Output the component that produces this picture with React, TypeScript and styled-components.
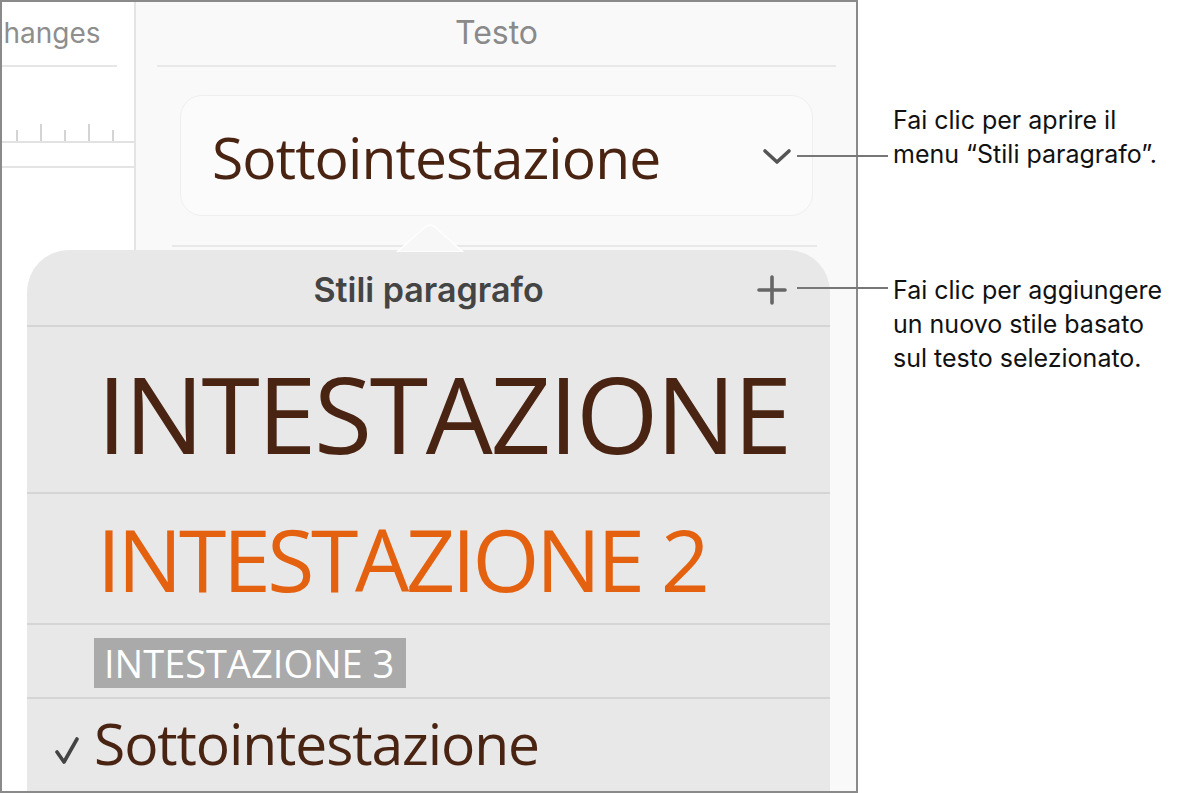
import * as React from 'react'
import styled, { createGlobalStyle } from 'styled-components'

const GlobalStyle = createGlobalStyle`
  html, body {
    margin: 0;
    padding: 0;
    background: #fff;
  }
  body {
    font-family: Inter, "Liberation Sans", sans-serif;
  }
`

const brown = '#4a2412'
const orange = '#e4620f'
const styleFont = '"Open Sans", "Noto Sans", sans-serif'

const Page = styled.div`
  display: flex;
  width: 1204px;
  height: 793px;
  background: #fff;
`

const Frame = styled.div`
  position: relative;
  display: flex;
  width: 858px;
  height: 793px;
  box-sizing: border-box;
  border: 2px solid #8a8a8a;
  overflow: hidden;
  flex-shrink: 0;
`

const LeftPane = styled.div`
  width: 132px;
  flex-shrink: 0;
  background: #fff;
  border-right: 2px solid #e4e4e4;
  overflow: hidden;
`

const CutTitle = styled.div`
  margin-left: -19px;
  padding-top: 15px;
  font-size: 28px;
  line-height: 32px;
  color: #8e8e8e;
  white-space: nowrap;
`

const ShortRule = styled.div`
  width: 115px;
  height: 2px;
  margin-top: 16px;
  background: #e6e6e6;
`

const Ruler = styled.div`
  display: flex;
  align-items: flex-end;
  height: 17px;
  margin-top: 57px;
  padding-left: 14px;
  gap: 22px;
  border-bottom: 2px solid #e2e2e2;
`

const Tick = styled.span<{ $tall?: boolean }>`
  width: 2px;
  height: ${p => (p.$tall ? 17 : 11)}px;
  background: #d4d4d4;
`

const FullRule = styled.div`
  height: 2px;
  margin-top: 23px;
  background: #e4e4e4;
`

const RightPane = styled.div`
  flex: 1;
  background: #f9f9f9;
  padding: 0 20px 0 21px;
`

const PaneTitle = styled.div`
  height: 63px;
  border-bottom: 2px solid #e8e8e8;
  font-size: 32px;
  line-height: 62px;
  text-align: center;
  color: #8a8a8a;
`

const StyleButton = styled.div`
  display: flex;
  align-items: center;
  justify-content: space-between;
  height: 121px;
  margin: 28px 23px 0 23px;
  padding: 0 20px 0 31px;
  box-sizing: border-box;
  border: 1px solid #efefef;
  border-radius: 22px;
  background: #fbfbfb;
`

const StyleName = styled.span`
  font-family: ${styleFont};
  font-size: 57px;
  letter-spacing: -0.9px;
  line-height: 1;
  color: ${brown};
  margin-top: 4px;
`

const ButtonRule = styled.div`
  height: 2px;
  margin: 29px 19px 0 15px;
  background: #e8e8e8;
`

const Popover = styled.div`
  position: absolute;
  left: 25px;
  top: 248px;
  width: 803px;
  bottom: -40px;
  background: #e8e8e8;
  border-radius: 42px 42px 0 0;
`

const Tail = styled.svg`
  position: absolute;
  left: 368px;
  top: -26px;
`

const PopoverHeader = styled.div`
  position: relative;
  height: 75px;
  border-bottom: 2px solid #d5d5d5;
  font-size: 34px;
  font-weight: 600;
  line-height: 80px;
  text-align: center;
  color: #444;
`

const AddButton = styled.svg`
  position: absolute;
  right: 42px;
  top: 24px;
`

const StyleRow = styled.div<{ $height: number; $pad: number }>`
  display: flex;
  align-items: flex-start;
  height: ${p => p.$height}px;
  box-sizing: border-box;
  padding: ${p => p.$pad}px 0 0 70px;
  border-bottom: 2px solid #d5d5d5;
  font-family: ${styleFont};
  line-height: 1;
  white-space: nowrap;
`

const Heading = styled.span<{ $size: number; $color: string; $track: number }>`
  font-size: ${p => p.$size}px;
  letter-spacing: ${p => p.$track}px;
  color: ${p => p.$color};
`

const Highlighted = styled.span`
  margin-left: -3px;
  padding: 6px 12px 6px 10px;
  font-size: 38px;
  color: #fff;
  background: #aaaaaa;
`

const CheckedRow = styled.div`
  position: relative;
  display: flex;
  align-items: flex-start;
  padding: 16px 0 0 67px;
  font-family: ${styleFont};
  line-height: 1;
  white-space: nowrap;
`

const Check = styled.svg`
  position: absolute;
  left: 28px;
  top: 38px;
`

const Callouts = styled.div`
  display: flex;
  flex-direction: column;
  gap: 102px;
  padding: 103px 0 0 35px;
`

const Callout = styled.div<{ $lineAt: number }>`
  position: relative;
  font-size: 25px;
  line-height: 34px;
  color: #111;
  white-space: nowrap;

  &::before {
    content: '';
    position: absolute;
    right: calc(100% + 5px);
    top: ${p => p.$lineAt}px;
    width: 91px;
    height: 2px;
    background: #777;
  }
`

export default function App() {
  return (
    <>
      <GlobalStyle />
      <Page>
        <Frame>
          <LeftPane>
            <CutTitle>Changes</CutTitle>
            <ShortRule />
            <Ruler>
              <Tick />
              <Tick $tall />
              <Tick />
              <Tick $tall />
              <Tick />
            </Ruler>
            <FullRule />
          </LeftPane>
          <RightPane>
            <PaneTitle>Testo</PaneTitle>
            <StyleButton>
              <StyleName>Sottointestazione</StyleName>
              <svg width="30" height="20" viewBox="0 0 30 20">
                <path d="M3 5 L15 16 L27 5" fill="none" stroke="#555" strokeWidth="3.6" strokeLinecap="round" strokeLinejoin="round" />
              </svg>
            </StyleButton>
            <ButtonRule />
          </RightPane>
          <Popover>
            <Tail width="70" height="28" viewBox="0 0 70 28">
              <path d="M2 28 L30 3 Q35 -1 40 3 L68 28 Z" fill="#f7f7f7" stroke="#ffffff" strokeWidth="1.5" />
            </Tail>
            <PopoverHeader>
              Stili paragrafo
              <AddButton width="32" height="32" viewBox="0 0 32 32">
                <path d="M16 3 V29 M3 16 H29" stroke="#666" strokeWidth="3.6" strokeLinecap="round" />
              </AddButton>
            </PopoverHeader>
            <StyleRow $height={167} $pad={33}>
              <Heading $size={106} $color={brown} $track={-2.4}>INTESTAZIONE</Heading>
            </StyleRow>
            <StyleRow $height={131} $pad={22}>
              <Heading $size={86} $color={orange} $track={-3.4}>INTESTAZIONE 2</Heading>
            </StyleRow>
            <StyleRow $height={74} $pad={13}>
              <Highlighted>INTESTAZIONE 3</Highlighted>
            </StyleRow>
            <CheckedRow>
              <Check width="24" height="28" viewBox="0 0 24 28">
                <path d="M2 15 L9 25 L22 2" fill="none" stroke="#444" strokeWidth="3.6" strokeLinecap="round" strokeLinejoin="round" />
              </Check>
              <Heading $size={57} $color={brown} $track={-1.1}>Sottointestazione</Heading>
            </CheckedRow>
          </Popover>
        </Frame>
        <Callouts>
          <Callout $lineAt={52}>
            Fai clic per aprire il
            <br />
            menu “Stili paragrafo”.
          </Callout>
          <Callout $lineAt={14}>
            Fai clic per aggiungere
            <br />
            un nuovo stile basato
            <br />
            sul testo selezionato.
          </Callout>
        </Callouts>
      </Page>
    </>
  )
}
